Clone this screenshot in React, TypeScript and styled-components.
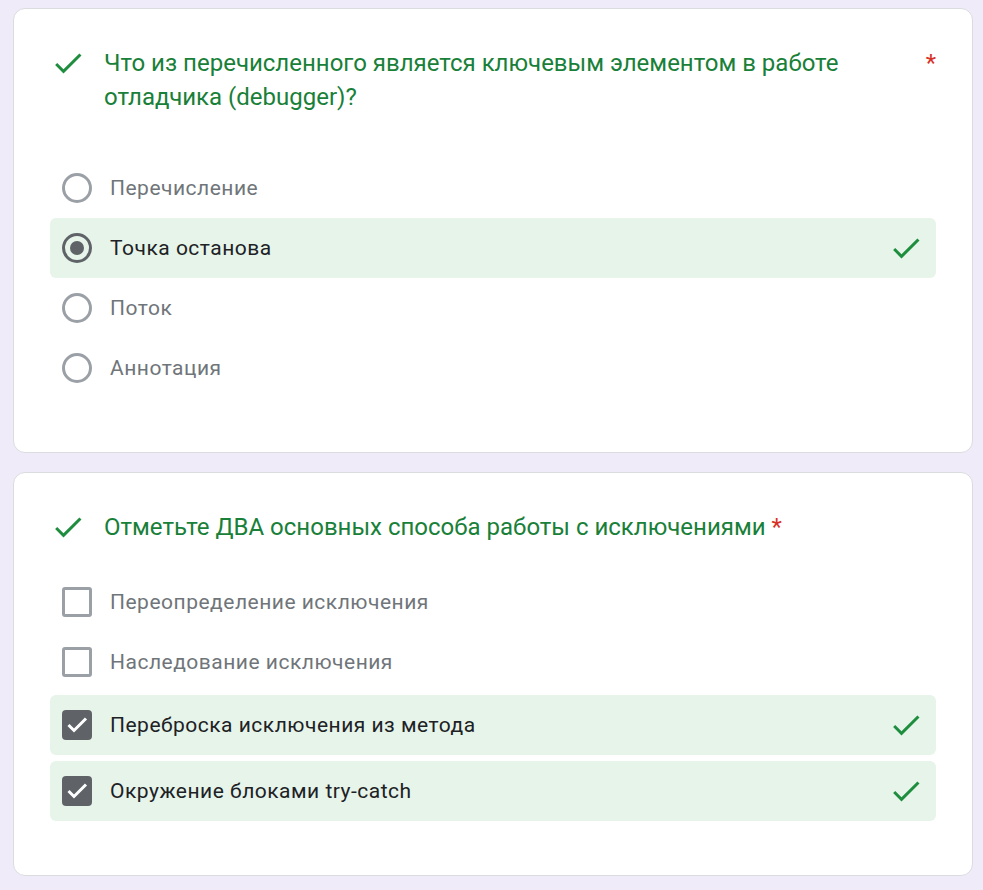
import React from "react";
import styled, { createGlobalStyle } from "styled-components";

const GlobalStyle = createGlobalStyle`
  html, body {
    margin: 0;
    padding: 0;
    background: #f0ebf8;
  }
  body {
    font-family: Roboto, "Noto Sans", Arial, sans-serif;
    -webkit-font-smoothing: antialiased;
  }
`;

const Page = styled.div`
  display: flex;
  flex-direction: column;
  gap: 19px;
  padding: 8px 10px 14px 13px;
  width: 960px;
`;

const Card = styled.section`
  box-sizing: border-box;
  width: 960px;
  background: #ffffff;
  border: 1px solid #dadce0;
  border-radius: 12px;
  padding: 37px 36px 54px 36px;
  display: flex;
  flex-direction: column;
`;

const TitleRow = styled.div<{ $gap: number }>`
  display: flex;
  align-items: flex-start;
  margin-bottom: ${(p) => p.$gap}px;
`;

const TitleIcon = styled.svg`
  flex: 0 0 36px;
  width: 36px;
  height: 36px;
  margin-top: -1px;
  margin-right: 18px;
  fill: #1e8e3e;
`;

const TitleText = styled.div`
  flex: 0 1 auto;
  font-size: 24px;
  line-height: 34px;
  color: #188038;
  letter-spacing: 0;
`;

const Required = styled.span`
  flex: 0 0 auto;
  font-size: 24px;
  line-height: 34px;
  color: #d93025;
  padding-left: 6px;
`;

const Options = styled.div`
  display: flex;
  flex-direction: column;
`;

const OptionRow = styled.div<{ $correct?: boolean; $mt?: number }>`
  display: flex;
  align-items: center;
  height: 60px;
  box-sizing: border-box;
  padding: 0 12px;
  border-radius: 6px;
  margin-top: ${(p) => p.$mt ?? 0}px;
  background: ${(p) => (p.$correct ? "#e6f4ea" : "transparent")};
`;

const RadioOuter = styled.span<{ $on?: boolean }>`
  box-sizing: border-box;
  flex: 0 0 30px;
  width: 30px;
  height: 30px;
  border-radius: 50%;
  border: 3px solid ${(p) => (p.$on ? "#5f6368" : "#9aa0a6")};
  display: flex;
  align-items: center;
  justify-content: center;
  margin-right: 18px;
`;

const RadioDot = styled.span`
  width: 14px;
  height: 14px;
  border-radius: 50%;
  background: #5f6368;
`;

const CheckBox = styled.span<{ $on?: boolean }>`
  box-sizing: border-box;
  flex: 0 0 30px;
  width: 30px;
  height: 30px;
  border-radius: ${(p) => (p.$on ? "4px" : "3px")};
  border: ${(p) => (p.$on ? "none" : "3px solid #9aa0a6")};
  background: ${(p) => (p.$on ? "#5f6368" : "transparent")};
  display: flex;
  align-items: center;
  justify-content: center;
  margin-right: 18px;
`;

const Label = styled.span<{ $on?: boolean }>`
  flex: 1 1 auto;
  font-size: 21px;
  line-height: 30px;
  letter-spacing: 0.5px;
  color: ${(p) => (p.$on ? "#202124" : "#70757a")};
`;

const RowCheck = styled.svg`
  flex: 0 0 36px;
  width: 36px;
  height: 36px;
  fill: #1e8e3e;
`;

const CHECK = "M9 16.17L4.83 12l-1.42 1.41L9 19 21 7l-1.41-1.41z";

const GreenCheck = ({ as }: { as: "title" | "row" }) =>
  as === "title" ? (
    <TitleIcon viewBox="0 0 24 24">
      <path d={CHECK} />
    </TitleIcon>
  ) : (
    <RowCheck viewBox="0 0 24 24">
      <path d={CHECK} />
    </RowCheck>
  );

type Opt = { text: string; on?: boolean; mt?: number };

const RadioOption = ({ text, on }: Opt) => (
  <OptionRow $correct={on}>
    <RadioOuter $on={on}>{on && <RadioDot />}</RadioOuter>
    <Label $on={on}>{text}</Label>
    {on && <GreenCheck as="row" />}
  </OptionRow>
);

const CheckOption = ({ text, on, mt }: Opt) => (
  <OptionRow $correct={on} $mt={mt}>
    <CheckBox $on={on}>
      {on && (
        <svg width="30" height="30" viewBox="0 0 30 30">
          <polyline
            points="6.5,15 12,20.5 24,8.5"
            fill="none"
            stroke="#ffffff"
            strokeWidth="3"
          />
        </svg>
      )}
    </CheckBox>
    <Label $on={on}>{text}</Label>
    {on && <GreenCheck as="row" />}
  </OptionRow>
);

export default function App() {
  return (
    <>
      <GlobalStyle />
      <Page>
        <Card>
          <TitleRow $gap={44}>
            <GreenCheck as="title" />
            <TitleText>
              Что из перечисленного является ключевым элементом в работе отладчика (debugger)?
            </TitleText>
            <Required>*</Required>
          </TitleRow>
          <Options>
            <RadioOption text="Перечисление" />
            <RadioOption text="Точка останова" on />
            <RadioOption text="Поток" />
            <RadioOption text="Аннотация" />
          </Options>
        </Card>
        <Card>
          <TitleRow $gap={27}>
            <GreenCheck as="title" />
            <TitleText>Отметьте ДВА основных способа работы с исключениями</TitleText>
            <Required>*</Required>
          </TitleRow>
          <Options>
            <CheckOption text="Переопределение исключения" />
            <CheckOption text="Наследование исключения" />
            <CheckOption text="Переброска исключения из метода" on mt={3} />
            <CheckOption text="Окружение блоками try-catch" on mt={6} />
          </Options>
        </Card>
      </Page>
    </>
  );
}
